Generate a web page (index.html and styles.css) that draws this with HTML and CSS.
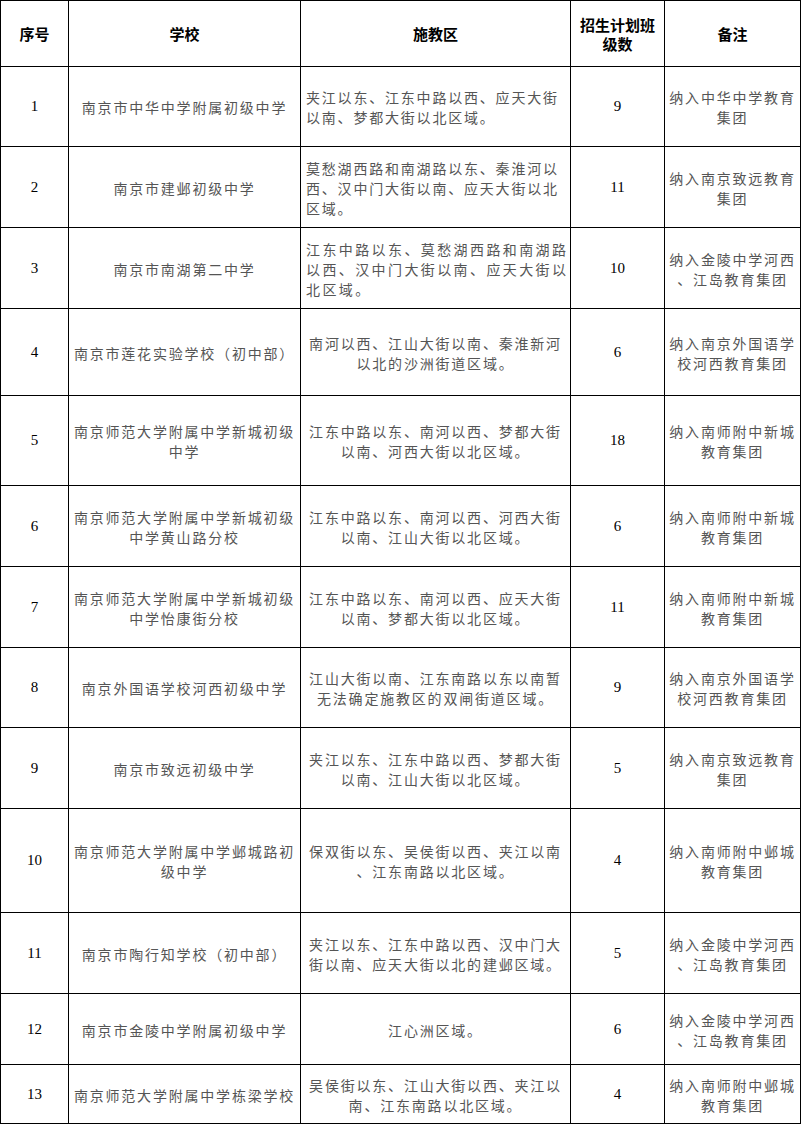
FILE: index.html
```html
<!DOCTYPE html>
<html lang="zh-CN">
<head>
<meta charset="utf-8">
<title>施教区表</title>
<link rel="stylesheet" href="styles.css">
</head>
<body>
<table class="plan">
  <colgroup>
    <col class="c-no">
    <col class="c-school">
    <col class="c-area">
    <col class="c-count">
    <col class="c-note">
  </colgroup>
  <thead>
    <tr class="r-head">
      <th>序号</th>
      <th>学校</th>
      <th>施教区</th>
      <th>招生计划班<br>级数</th>
      <th>备注</th>
    </tr>
  </thead>
  <tbody>
    <tr class="r-80">
      <td class="num">1</td>
      <td class="txt">南京市中华中学附属初级中学</td>
      <td class="txt left">夹江以东、江东中路以西、应天大街<br>以南、梦都大街以北区域。</td>
      <td class="num">9</td>
      <td class="txt">纳入中华中学教育<br>集团</td>
    </tr>
    <tr class="r-81">
      <td class="num">2</td>
      <td class="txt">南京市建邺初级中学</td>
      <td class="txt left">莫愁湖西路和南湖路以东、秦淮河以<br>西、汉中门大街以南、应天大街以北<br>区域。</td>
      <td class="num">11</td>
      <td class="txt">纳入南京致远教育<br>集团</td>
    </tr>
    <tr class="r-81">
      <td class="num">3</td>
      <td class="txt">南京市南湖第二中学</td>
      <td class="txt left wide">江东中路以东、莫愁湖西路和南湖路<br>以西、汉中门大街以南、应天大街以<br>北区域。</td>
      <td class="num">10</td>
      <td class="txt">纳入金陵中学河西<br>、江岛教育集团</td>
    </tr>
    <tr class="r-87">
      <td class="num">4</td>
      <td class="txt">南京市莲花实验学校（初中部）</td>
      <td class="txt">南河以西、江山大街以南、秦淮新河<br>以北的沙洲街道区域。</td>
      <td class="num">6</td>
      <td class="txt">纳入南京外国语学<br>校河西教育集团</td>
    </tr>
    <tr class="r-90">
      <td class="num">5</td>
      <td class="txt">南京师范大学附属中学新城初级<br>中学</td>
      <td class="txt">江东中路以东、南河以西、梦都大街<br>以南、河西大街以北区域。</td>
      <td class="num">18</td>
      <td class="txt">纳入南师附中新城<br>教育集团</td>
    </tr>
    <tr class="r-81">
      <td class="num">6</td>
      <td class="txt">南京师范大学附属中学新城初级<br>中学黄山路分校</td>
      <td class="txt">江东中路以东、南河以西、河西大街<br>以南、江山大街以北区域。</td>
      <td class="num">6</td>
      <td class="txt">纳入南师附中新城<br>教育集团</td>
    </tr>
    <tr class="r-81">
      <td class="num">7</td>
      <td class="txt">南京师范大学附属中学新城初级<br>中学怡康街分校</td>
      <td class="txt">江东中路以东、南河以西、应天大街<br>以南、梦都大街以北区域。</td>
      <td class="num">11</td>
      <td class="txt">纳入南师附中新城<br>教育集团</td>
    </tr>
    <tr class="r-80">
      <td class="num">8</td>
      <td class="txt">南京外国语学校河西初级中学</td>
      <td class="txt">江山大街以南、江东南路以东以南暂<br>无法确定施教区的双闸街道区域。</td>
      <td class="num">9</td>
      <td class="txt">纳入南京外国语学<br>校河西教育集团</td>
    </tr>
    <tr class="r-81">
      <td class="num">9</td>
      <td class="txt">南京市致远初级中学</td>
      <td class="txt">夹江以东、江东中路以西、梦都大街<br>以南、江山大街以北区域。</td>
      <td class="num">5</td>
      <td class="txt">纳入南京致远教育<br>集团</td>
    </tr>
    <tr class="r-104">
      <td class="num">10</td>
      <td class="txt">南京师范大学附属中学邺城路初<br>级中学</td>
      <td class="txt">保双街以东、吴侯街以西、夹江以南<br>、江东南路以北区域。</td>
      <td class="num">4</td>
      <td class="txt">纳入南师附中邺城<br>教育集团</td>
    </tr>
    <tr class="r-81">
      <td class="num">11</td>
      <td class="txt">南京市陶行知学校（初中部）</td>
      <td class="txt">夹江以东、江东中路以西、汉中门大<br>街以南、应天大街以北的建邺区域。</td>
      <td class="num">5</td>
      <td class="txt">纳入金陵中学河西<br>、江岛教育集团</td>
    </tr>
    <tr class="r-71">
      <td class="num">12</td>
      <td class="txt">南京市金陵中学附属初级中学</td>
      <td class="txt">江心洲区域。</td>
      <td class="num">6</td>
      <td class="txt">纳入金陵中学河西<br>、江岛教育集团</td>
    </tr>
    <tr class="r-59">
      <td class="num">13</td>
      <td class="txt">南京师范大学附属中学栋梁学校</td>
      <td class="txt">吴侯街以东、江山大街以西、夹江以<br>南、江东南路以北区域。</td>
      <td class="num">4</td>
      <td class="txt">纳入南师附中邺城<br>教育集团</td>
    </tr>
  </tbody>
</table>
</body>
</html>
```

FILE: styles.css
```css
html, body {
  margin: 0;
  padding: 0;
  background: #ffffff;
}

.plan {
  width: 800px;
  table-layout: fixed;
  border-collapse: collapse;
  font-family: "Noto Sans CJK SC", "Noto Sans", sans-serif;
}

.c-no { width: 68px; }
.c-school { width: 232px; }
.c-area { width: 270px; }
.c-count { width: 94px; }
.c-note { width: 136px; }

.plan th,
.plan td {
  border: 1px solid #000000;
  padding: 0 2px;
  text-align: center;
  vertical-align: middle;
}

.plan th {
  font-size: 15px;
  font-weight: bold;
  color: #000000;
  line-height: 19px;
}

.r-head { height: 66px; }
.r-59 { height: 59px; }
.r-71 { height: 71px; }
.r-80 { height: 80px; }
.r-81 { height: 81px; }
.r-87 { height: 87px; }
.r-90 { height: 90px; }
.r-104 { height: 104px; }

.plan td.num {
  font-family: "Liberation Serif", "Times New Roman", serif;
  font-size: 15px;
  color: #000000;
}

.plan td.txt {
  font-size: 14px;
  line-height: 20px;
  letter-spacing: 1.8px;
  color: #555555;
  white-space: nowrap;
  padding-top: 1px;
}

.plan td.left {
  text-align: left;
  padding-left: 5px;
}

.plan td.wide {
  letter-spacing: 2.4px;
}
```
